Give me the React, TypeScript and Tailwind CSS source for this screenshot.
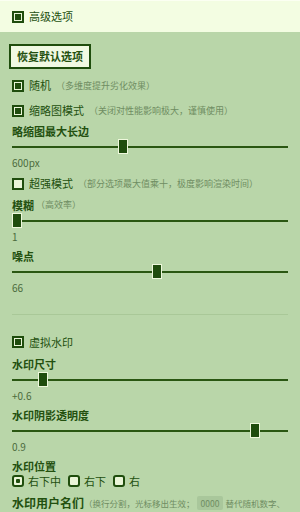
import React from 'react'

const font = { fontFamily: '"Noto Sans CJK SC", "Noto Sans", sans-serif' }

function Check({ checked }: { checked: boolean }) {
  return (
    <span className="flex h-[12px] w-[12px] shrink-0 items-center justify-center border-2 border-[#1f4d0d] bg-[#eaf5d8]">
      {checked && <span className="h-[6px] w-[6px] bg-[#1f4d0d]" />}
    </span>
  )
}

function Radio({ checked }: { checked: boolean }) {
  return (
    <span className="flex h-[12px] w-[12px] shrink-0 items-center justify-center rounded-[3px] border-2 border-[#1f4d0d] bg-[#eaf5d8]">
      {checked && <span className="h-[4px] w-[4px] rounded-[1px] bg-[#1f4d0d]" />}
    </span>
  )
}

function Slider({ left }: { left: number }) {
  return (
    <div className="relative flex h-[15px] items-center">
      <div className="h-[2px] w-full bg-[#2a5712]" />
      <div
        className="absolute top-0 h-[15px] w-[10px] border border-[#eef8dc] bg-[#1f4d0d]"
        style={{ left }}
      />
    </div>
  )
}

function Label({ children, note }: { children: React.ReactNode; note?: string }) {
  return (
    <div className="flex h-[16px] items-center text-[11px] font-bold text-[#23500f]">
      {children}
      {note && <span className="ml-[2px] text-[9px] font-normal text-[#6f8d62]">{note}</span>}
    </div>
  )
}

function Value({ children }: { children: React.ReactNode }) {
  return <div className="flex h-[16px] items-center text-[10px] text-[#4b6b3c]">{children}</div>
}

function CheckRow({ checked, label, note }: { checked: boolean; label: string; note?: string }) {
  return (
    <div className="flex items-center gap-[5px] text-[11px] text-[#23500f]">
      <Check checked={checked} />
      <span>{label}</span>
      {note && <span className="text-[9px] text-[#6f8d62]">{note}</span>}
    </div>
  )
}

export default function App() {
  return (
    <div className="h-[512px] w-[300px] overflow-hidden bg-[#b9d6a9]" style={font}>
      <div className="flex h-[32px] items-center border-t border-[#fbfff2] bg-[#f3fde2] px-[12px]">
        <CheckRow checked label="高级选项" />
      </div>

      <div className="px-[12px] pb-4">
        <button className="ml-[-3px] mt-[12px] flex h-[25px] items-center border-2 border-[#1f4d0d] bg-[#f0f9e2] px-[6px] text-[11px] font-bold text-[#23500f]">
          恢复默认选项
        </button>

        <div className="mt-[4px] flex h-[25px] items-center">
          <CheckRow checked label="随机" note="（多维度提升劣化效果）" />
        </div>
        <div className="flex h-[25px] items-center">
          <CheckRow checked label="缩略图模式" note="（关闭对性能影响极大，谨慎使用）" />
        </div>

        <Label>略缩图最大长边</Label>
        <Slider left={106} />
        <Value>600px</Value>

        <div className="flex h-[27px] items-center">
          <CheckRow checked={false} label="超强模式" note="（部分选项最大值乘十，极度影响渲染时间）" />
        </div>

        <Label note="（高效率）">模糊</Label>
        <Slider left={0} />
        <Value>1</Value>

        <div className="mt-[4px]">
          <Label>噪点</Label>
        </div>
        <Slider left={140} />
        <Value>66</Value>

        <div className="mt-[19px] h-px bg-[#a9c898]" />

        <div className="mt-[18px] flex h-[18px] items-center">
          <CheckRow checked label="虚拟水印" />
        </div>

        <div className="mt-[5px]">
          <Label>水印尺寸</Label>
        </div>
        <Slider left={26} />
        <Value>+0.6</Value>

        <div className="mt-[4px]">
          <Label>水印阴影透明度</Label>
        </div>
        <Slider left={238} />
        <Value>0.9</Value>

        <div className="mt-[4px]">
          <Label>水印位置</Label>
        </div>
        <div className="flex h-[14px] items-center gap-[4px] text-[11px] text-[#23500f]">
          <Radio checked />
          <span className="mr-[3px]">右下中</span>
          <Radio checked={false} />
          <span className="mr-[3px]">右下</span>
          <Radio checked={false} />
          <span>右</span>
        </div>

        <div className="mt-[7px] flex h-[16px] items-center whitespace-nowrap text-[12px] font-bold text-[#23500f]">
          水印用户名们
          <span className="text-[8.5px] font-normal text-[#6f8d62]">
            （换行分割，光标移出生效；
            <span className="mx-[2px] rounded-[2px] bg-[#a9c79b] px-[4px] py-[1px]">0000</span>
            替代随机数字、
          </span>
        </div>
      </div>
    </div>
  )
}
